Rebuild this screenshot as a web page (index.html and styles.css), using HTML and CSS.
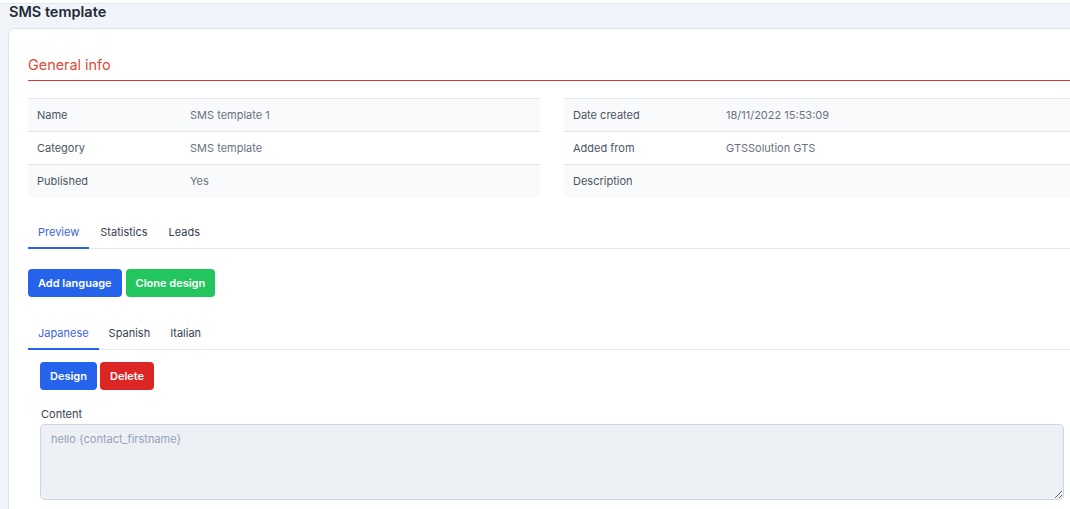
FILE: index.html
```html
<!DOCTYPE html>
<html lang="en">
<head>
<meta charset="utf-8">
<title>SMS template</title>
<link rel="stylesheet" href="styles.css">
</head>
<body>
<div class="topstrip"></div>
<div class="page">
  <h1 class="page-title">SMS template</h1>
  <div class="card">
    <h2 class="section-title">General info</h2>
    <div class="info-grid">
      <table class="info-table">
        <tr class="striped"><td class="lbl">Name</td><td class="val">SMS template 1</td></tr>
        <tr><td class="lbl">Category</td><td class="val">SMS template</td></tr>
        <tr class="striped"><td class="lbl">Published</td><td class="val">Yes</td></tr>
      </table>
      <table class="info-table">
        <tr class="striped"><td class="lbl">Date created</td><td class="val">18/11/2022 15:53:09</td></tr>
        <tr><td class="lbl">Added from</td><td class="val">GTSSolution GTS</td></tr>
        <tr class="striped"><td class="lbl">Description</td><td class="val"></td></tr>
      </table>
    </div>

    <div class="tabs tabs-main">
      <span class="tab active">Preview</span>
      <span class="tab">Statistics</span>
      <span class="tab">Leads</span>
    </div>

    <div class="btn-row">
      <button class="btn btn-blue">Add language</button>
      <button class="btn btn-green">Clone design</button>
    </div>

    <div class="tabs tabs-lang">
      <span class="tab active">Japanese</span>
      <span class="tab">Spanish</span>
      <span class="tab">Italian</span>
    </div>

    <div class="lang-panel">
      <div class="btn-row tight">
        <button class="btn btn-blue">Design</button>
        <button class="btn btn-red">Delete</button>
      </div>
      <label class="field-label">Content</label>
      <textarea class="content-box" placeholder="hello {contact_firstname}"></textarea>
    </div>
  </div>
</div>
</body>
</html>
```

FILE: styles.css
```css
html, body {
  margin: 0;
  padding: 0;
  overflow: hidden;
}
body {
  background: #f1f4f9;
  font-family: Inter, "Noto Sans", sans-serif;
  color: #374151;
  width: 1070px;
  height: 509px;
}
.topstrip {
  height: 3px;
  background: #ffffff;
  border-bottom: 1px solid #e3e7ee;
}
.page {
  padding: 0 0 0 8px;
  width: 1100px;
}
.page-title {
  margin: 0;
  padding-left: 1px;
  font-size: 14.5px;
  line-height: 16px;
  font-weight: 600;
  color: #1f2937;
  height: 24px;
}
.card {
  background: #ffffff;
  border: 1px solid #dde4ee;
  border-radius: 6px;
  padding: 19px 20px 20px 19px;
  width: 1048px;
}
.section-title {
  margin: 7px 0 0 0;
  font-size: 14.4px;
  line-height: 20px;
  font-weight: 400;
  color: #dc4a38;
  padding-bottom: 5px;
  border-bottom: 1px solid #d33b2c;
}
.info-grid {
  margin-top: 17px;
  display: grid;
  grid-template-columns: 1fr 1fr;
  column-gap: 24px;
}
.info-table {
  width: 100%;
  border-collapse: collapse;
  font-size: 11px;
}
.info-table tr {
  border-top: 1px solid #e3e8ef;
}
.info-table tr.striped {
  background: #f8fafc;
}
.info-table td {
  height: 32px;
  padding: 0;
  vertical-align: middle;
}
.info-table td.lbl {
  width: 153px;
  padding-left: 9px;
  color: #4b5563;
}
.info-table td.val {
  color: #6b7280;
}
.tabs {
  display: flex;
  border-bottom: 1px solid #e3e8ef;
}
.tabs-main {
  margin-top: 18px;
}
.tabs-lang {
  margin-top: 19px;
}
.tab {
  font-size: 11px;
  line-height: 16px;
  padding: 9px 10px 7px 10px;
  color: #374151;
  border-bottom: 2px solid transparent;
  margin-bottom: -1px;
}
.tabs-main .tab + .tab {
  margin-left: 1px;
}
.tab.active {
  color: #3b63e6;
  border-bottom-color: #2563eb;
}
.btn-row {
  display: flex;
  gap: 4px;
  margin-top: 20px;
}
.btn-row.tight {
  gap: 3px;
  margin-top: 0;
}
.btn {
  font-family: Inter, "Noto Sans", sans-serif;
  font-size: 11px;
  line-height: 16px;
  font-weight: 600;
  color: #ffffff;
  border: none;
  border-radius: 4px;
  padding: 6px 10px;
  height: 28px;
}
.btn-blue { background: #2563eb; }
.btn-green { background: #22c55e; }
.btn-red { background: #dc2626; }
.lang-panel {
  padding: 12px 12px 0 12px;
  display: flex;
  flex-direction: column;
}
.field-label {
  margin-top: 16px;
  font-size: 11px;
  line-height: 16px;
  color: #374151;
  padding-left: 1px;
}
.content-box {
  margin-top: 2px;
  box-sizing: border-box;
  height: 76px;
  width: 100%;
  background: #edf0f5;
  border: 1px solid #cdd6e3;
  border-radius: 5px;
  padding: 6px 10px;
  font-family: Inter, "Noto Sans", sans-serif;
  font-size: 11px;
  line-height: 16px;
  color: #374151;
}
.content-box::placeholder {
  color: #94a3b8;
}
```
